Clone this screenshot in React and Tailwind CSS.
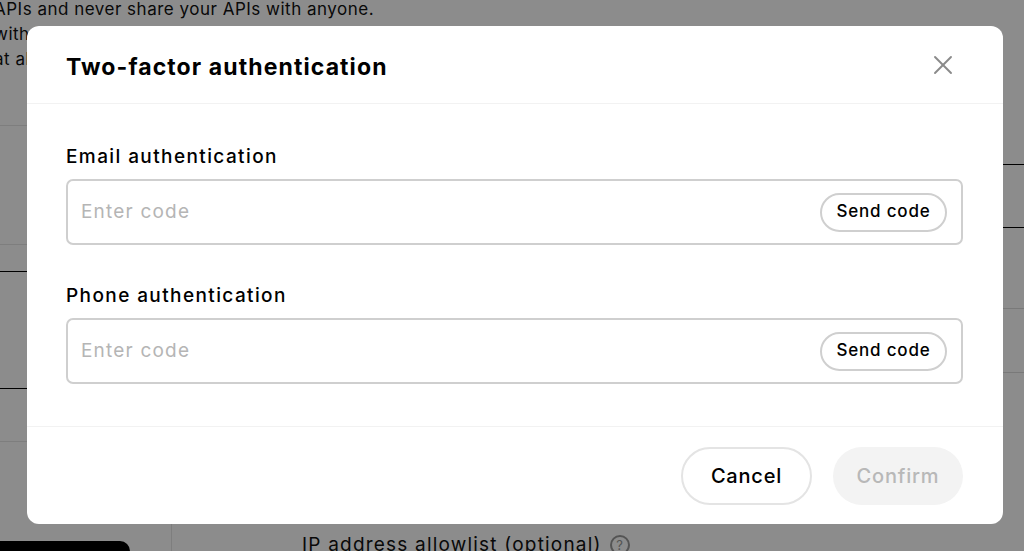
import { X } from 'lucide-react';

function CodeField({ label }) {
  return (
    <div className="flex flex-col gap-[9px]">
      <label className="text-[19px] font-medium text-black leading-[26px] tracking-[1.4px]">{label}</label>
      <div className="flex items-center h-[66px] border-2 border-[#cfcfcf] rounded-[7px] pl-[13px] pr-[13px]">
        <input
          type="text"
          placeholder="Enter code"
          className="flex-1 outline-none text-[19px] tracking-[1.2px] text-black placeholder:text-[#b5b5b5] bg-transparent"
        />
        <button className="h-[39px] w-[127px] mr-[1px] rounded-full border-2 border-[#cfcfcf] text-[17px] tracking-[0.8px] font-medium text-black">
          Send code
        </button>
      </div>
    </div>
  );
}

export default function App() {
  return (
    <div className="relative w-[1024px] h-[551px] overflow-hidden bg-white font-['Inter',sans-serif] text-black">
      {/* page underneath */}
      <div className="h-[104px] -ml-[6px] -mt-[3px] text-[17px] leading-[25px] tracking-[0.5px] text-[#111] whitespace-nowrap">
        <p>APIs and never share your APIs with anyone.</p>
        <p>with integrations, your data is shared with third-party platforms. Please proceed with caution.</p>
        <p>at all times when connecting your API keys to external tools.</p>
      </div>
      <div className="flex h-[420px]">
        <div className="w-[128px] flex flex-col">
          <div className="h-[24px]" />
          <div className="h-[119px] border-t border-[#e6e6e6]" />
          <div className="h-[27px] border-t border-[#e6e6e6]" />
          <div className="h-[117px] border-t border-black" />
          <div className="h-[53px] border-t border-black" />
          <div className="h-[80px] border-t border-[#e6e6e6]" />
        </div>
        <div className="flex-1" />
        <div className="w-[21px] flex flex-col">
          <div className="h-[63px]" />
          <div className="h-[63px] border-t border-black" />
          <div className="h-[81px] border-t border-black" />
          <div className="h-[64px] border-t border-[#dcdcdc]" />
          <div className="h-[50px] border-t border-[#dcdcdc]" />
        </div>
      </div>
      <div className="flex h-[30px]">
        <div className="w-[172px] border-r border-[#e6e6e6] flex flex-col justify-end">
          <div className="h-[10px] w-[140px] -ml-[10px] bg-black rounded-tr-[26px]" />
        </div>
        <div className="pl-[130px] pt-[11px] flex items-start gap-[8px] text-[19px] tracking-[1.2px] text-[#111] leading-[26px] whitespace-nowrap">
          IP address allowlist (optional)
          <span className="mt-[3px] w-[20px] h-[20px] rounded-full border-2 border-[#999] text-[13px] tracking-normal flex items-center justify-center text-[#999]">?</span>
        </div>
      </div>

      {/* overlay */}
      <div className="absolute inset-0 bg-black/45" />

      {/* dialog */}
      <div className="absolute left-[27px] top-[26px] w-[976px] h-[498px] bg-white rounded-[12px] flex flex-col">
        <div className="h-[78px] flex items-center justify-between pl-[39px] pr-[44px] border-b border-[#f2f2f2]">
          <h2 className="text-[23px] font-bold tracking-[1.1px] pt-[5px]">Two-factor authentication</h2>
          <button className="text-[#8a8a8a]">
            <X size={32} strokeWidth={1.4} />
          </button>
        </div>
        <div className="flex-1 flex flex-col gap-[38px] pt-[40px] px-[39px] pr-[40px] border-b border-[#f2f2f2]">
          <CodeField label="Email authentication" />
          <CodeField label="Phone authentication" />
        </div>
        <div className="h-[97px] flex items-center justify-end gap-[21px] pr-[40px]">
          <button className="w-[131px] h-[58px] rounded-full border-2 border-[#e4e4e4] text-[20px] tracking-[0.8px] font-medium">
            Cancel
          </button>
          <button className="w-[130px] h-[58px] rounded-full bg-[#f3f3f3] text-[20px] tracking-[0.8px] font-medium text-[#b8b8b8]">
            Confirm
          </button>
        </div>
      </div>
    </div>
  );
}
